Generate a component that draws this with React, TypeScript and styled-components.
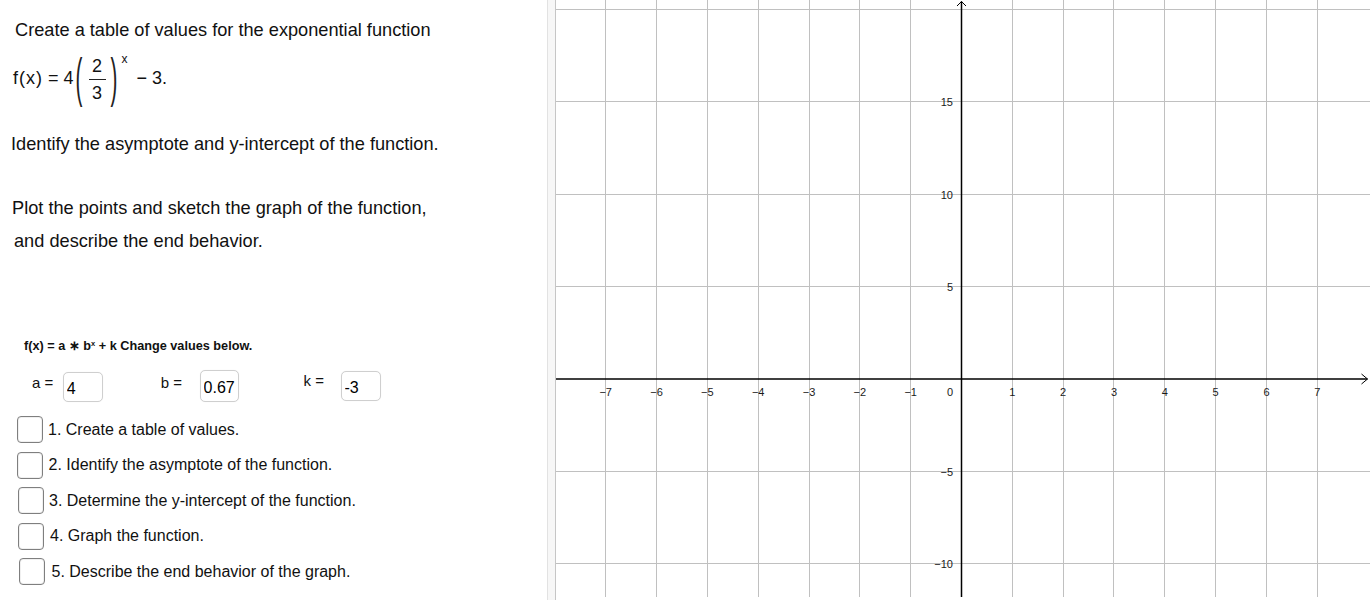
import React from "react";
import styled, { createGlobalStyle } from "styled-components";

const GlobalStyle = createGlobalStyle`
  html, body { margin: 0; padding: 0; background: #ffffff; }
  body { font-family: "Liberation Sans", Arial, sans-serif; color: #000; }
  * { box-sizing: border-box; }
`;

const Page = styled.div`
  display: flex;
  width: 1370px;
  height: 600px;
  overflow: hidden;
  background: #fff;
`;

const Panel = styled.div`
  width: 547px;
  height: 600px;
  display: flex;
  flex-direction: column;
  padding-top: 19px;
`;

const Prose = styled.div<{ $ml: number; $mt: number }>`
  font-family: "Liberation Sans", Arial, sans-serif;
  font-size: 18.2px;
  line-height: 22px;
  color: #111;
  margin-left: ${(p) => p.$ml}px;
  margin-top: ${(p) => p.$mt}px;
  white-space: nowrap;
`;

const Formula = styled.div`
  display: flex;
  align-items: center;
  height: 50px;
  margin-top: 12px;
  margin-left: 13px;
  font-family: "Liberation Sans", Arial, sans-serif;
  font-size: 18px;
  color: #111;
`;

const MathPart = styled.span<{ $ml?: number; $ls?: number }>`
  margin-left: ${(p) => p.$ml ?? 0}px;
  letter-spacing: ${(p) => p.$ls ?? 0}px;
  line-height: 22px;
`;

const Paren = styled.span<{ $ml?: number }>`
  display: inline-block;
  margin-left: ${(p) => p.$ml ?? 0}px;
  font-size: 18px;
  line-height: 18px;
  transform: scale(1.15, 3);
  color: #222;
`;

const Fraction = styled.span`
  display: inline-flex;
  flex-direction: column;
  align-items: center;
  margin-left: 7px;
  margin-top: 2px;
  font-size: 18px;
`;

const Num = styled.span`
  line-height: 20px;
  padding: 0 1px 3px;
`;

const Den = styled.span`
  line-height: 20px;
  border-top: 1px solid #222;
  padding: 3px 1px 0;
  width: 17px;
  text-align: center;
`;

const Sup = styled.span`
  align-self: flex-start;
  font-size: 12px;
  line-height: 12px;
  margin-left: 5px;
  margin-top: 0px;
`;

const BoldLine = styled.div`
  margin-left: 24px;
  margin-top: 87px;
  font-family: "Liberation Sans", Arial, sans-serif;
  font-weight: bold;
  font-size: 12.7px;
  line-height: 15px;
  color: #111;
  white-space: nowrap;
  sup {
    font-size: 7.5px;
    vertical-align: 4px;
    line-height: 0;
  }
`;

const InputRow = styled.div`
  display: flex;
  align-items: flex-start;
  margin-top: 16px;
  height: 32px;
`;

const Field = styled.div<{ $ml: number; $mt: number }>`
  display: flex;
  align-items: flex-start;
  margin-left: ${(p) => p.$ml}px;
  margin-top: ${(p) => p.$mt}px;
`;

const FieldLabel = styled.span<{ $dy: number; $gap: number }>`
  font-family: "Liberation Sans", Arial, sans-serif;
  font-size: 15px;
  line-height: 17px;
  margin-top: ${(p) => p.$dy}px;
  margin-right: ${(p) => p.$gap}px;
  color: #111;
`;

const ValueBox = styled.input<{ $w: number; $h: number }>`
  width: ${(p) => p.$w}px;
  height: ${(p) => p.$h}px;
  border: 1px solid #cfcfcf;
  border-radius: 5px;
  background: #fff;
  padding: 4px 0 0 3px;
  font-family: "Liberation Sans", Arial, sans-serif;
  font-size: 16px;
  color: #000;
  outline: none;
  box-shadow: 0 0 1px rgba(0, 0, 0, 0.08);
`;

const TaskList = styled.div`
  display: flex;
  flex-direction: column;
  gap: 8.5px;
  margin-top: 14px;
`;

const TaskRow = styled.label<{ $dx: number; $gap: number }>`
  display: flex;
  align-items: center;
  margin-left: ${(p) => p.$dx}px;
  gap: ${(p) => p.$gap}px;
  font-family: "Liberation Sans", Arial, sans-serif;
  font-size: 16px;
  color: #111;
  white-space: nowrap;
`;

const TaskBox = styled.span`
  display: inline-block;
  width: 26px;
  height: 27px;
  border: 1px solid #7f7f7f;
  border-radius: 4px;
  background: #fff;
  box-shadow: inset 0 0 0 1px #f0f0f0;
  flex-shrink: 0;
`;

const Divider = styled.div`
  width: 9px;
  height: 600px;
  background: #f7f7f7;
  border-left: 1px solid #e2e2e2;
  border-right: 1px solid #c6c6c6;
`;

const GraphArea = styled.div`
  flex: 1;
  height: 600px;
  background: #fff;
`;

const GraphSvg = styled.svg`
  display: block;
  font-family: "Liberation Sans", Arial, sans-serif;
`;

const tasks = [
  { text: "1. Create a table of values.", dx: 17, gap: 5 },
  { text: "2. Identify the asymptote of the function.", dx: 17, gap: 5.5 },
  { text: "3. Determine the y-intercept of the function.", dx: 17.5, gap: 5.5 },
  { text: "4. Graph the function.", dx: 18, gap: 6 },
  { text: "5. Describe the end behavior of the graph.", dx: 18.5, gap: 7 },
];

const W = 814;
const H = 597;
const OX = 405.5;
const OY = 379;
const UX = 50.83;
const UY5 = 92.4;

const fmt = (n: number) => (n < 0 ? "\u2212" + Math.abs(n) : String(n));

function Graph() {
  const xs: number[] = [];
  for (let n = -7; n <= 7; n++) xs.push(n);
  const ys: number[] = [];
  for (let k = -2; k <= 4; k++) ys.push(k);
  const ax = Math.floor(OX) + 0.5;
  return (
    <GraphSvg width={W} height={H} viewBox={`0 0 ${W} ${H}`}>
      {xs
        .filter((n) => n !== 0)
        .map((n) => {
          const x = Math.floor(OX + n * UX) + 0.5;
          return <line key={"v" + n} x1={x} y1={0} x2={x} y2={H} stroke="#c0c0c0" strokeWidth={1} />;
        })}
      {ys
        .filter((k) => k !== 0)
        .map((k) => {
          const y = Math.floor(OY - k * UY5) + 0.5;
          return <line key={"h" + k} x1={0} y1={y} x2={W} y2={y} stroke="#c0c0c0" strokeWidth={1} />;
        })}
      <line x1={0} y1={OY} x2={811.5} y2={OY} stroke="#000" strokeWidth={1.5} />
      <line x1={ax} y1={1.5} x2={ax} y2={H} stroke="#000" strokeWidth={1.5} />
      <polyline points={`805.5,374 811.5,379 805.5,384`} fill="none" stroke="#000" strokeWidth={1} />
      <polyline points={`${ax - 4.5},6 ${ax},1.5 ${ax + 4.5},6`} fill="none" stroke="#000" strokeWidth={1} />
      {xs
        .filter((n) => n !== 0)
        .map((n) => (
          <text key={"tx" + n} x={OX + n * UX} y={395.5} fontSize={11} fill="#1a1a1a" textAnchor="middle">
            {fmt(n)}
          </text>
        ))}
      <text x={397} y={395.5} fontSize={11} fill="#1a1a1a" textAnchor="end">
        0
      </text>
      {ys
        .filter((k) => k !== 0 && k < 4)
        .map((k) => (
          <text key={"ty" + k} x={397} y={OY - k * UY5 + 4.3} fontSize={11} fill="#1a1a1a" textAnchor="end">
            {fmt(k * 5)}
          </text>
        ))}
    </GraphSvg>
  );
}

export default function App() {
  return (
    <>
      <GlobalStyle />
      <Page>
        <Panel>
          <Prose $ml={15} $mt={0}>Create a table of values for the exponential function</Prose>
          <Formula>
            <MathPart $ls={1}>f(x)</MathPart>
            <MathPart $ml={5}>=</MathPart>
            <MathPart $ml={5}>4</MathPart>
            <Paren $ml={2}>(</Paren>
            <Fraction>
              <Num>2</Num>
              <Den>3</Den>
            </Fraction>
            <Paren $ml={5}>)</Paren>
            <Sup>x</Sup>
            <MathPart $ml={9}>{"\u2212 3."}</MathPart>
          </Formula>
          <Prose $ml={11} $mt={30}>Identify the asymptote and y-intercept of the function.</Prose>
          <Prose $ml={12} $mt={42}>Plot the points and sketch the graph of the function,</Prose>
          <Prose $ml={14} $mt={11}>and describe the end behavior.</Prose>
          <BoldLine>
            f(x) = a ∗ b<sup>x</sup> + k Change values below.
          </BoldLine>
          <InputRow>
            <Field $ml={32} $mt={2}>
              <FieldLabel $dy={2} $gap={9.5}>a =</FieldLabel>
              <ValueBox $w={40} $h={30} defaultValue="4" readOnly />
            </Field>
            <Field $ml={58} $mt={0}>
              <FieldLabel $dy={4} $gap={17.5}>b =</FieldLabel>
              <ValueBox $w={39} $h={32} defaultValue="0.67" readOnly />
            </Field>
            <Field $ml={65} $mt={1}>
              <FieldLabel $dy={0.5} $gap={16.5}>k =</FieldLabel>
              <ValueBox $w={40} $h={30} defaultValue="-3" readOnly />
            </Field>
          </InputRow>
          <TaskList>
            {tasks.map((t) => (
              <TaskRow key={t.text} $dx={t.dx} $gap={t.gap}>
                <TaskBox />
                <span>{t.text}</span>
              </TaskRow>
            ))}
          </TaskList>
        </Panel>
        <Divider />
        <GraphArea>
          <Graph />
        </GraphArea>
      </Page>
    </>
  );
}
